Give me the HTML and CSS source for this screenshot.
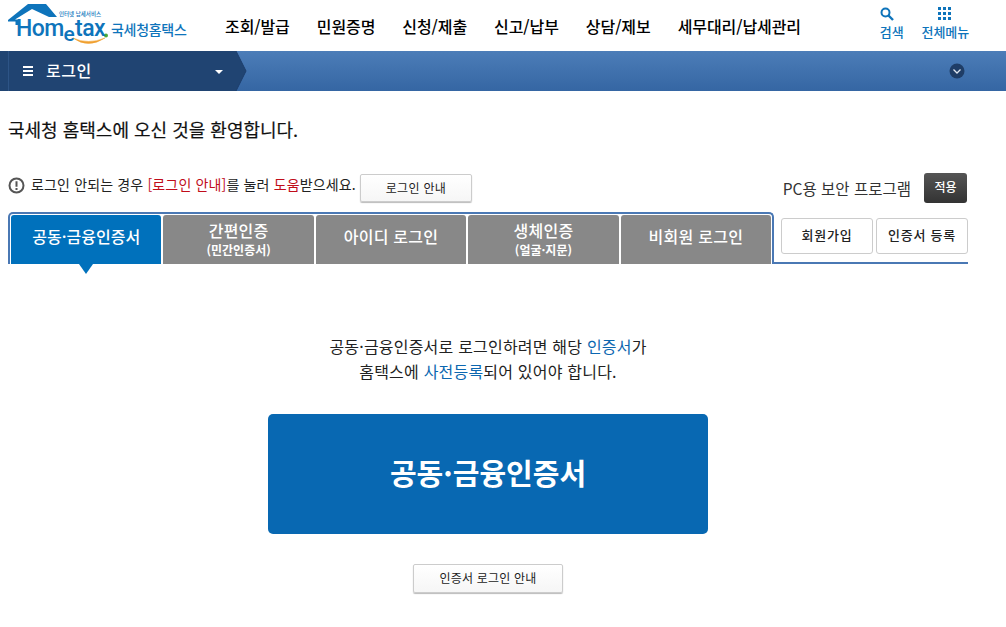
FILE: index.html
```html
<!DOCTYPE html>
<html lang="ko">
<head>
<meta charset="utf-8">
<title>국세청 홈택스</title>
<link rel="stylesheet" href="styles.css">
</head>
<body>
<header class="top">
  <a class="logo">
    <svg class="logo-art" width="190" height="50" viewBox="0 0 190 50">
      <path d="M8 20 L28 4 H46 L57 17 H49 L32 9 L15 19.5 H19 V25 H15.5 V21.5 H8 Z" fill="#0e74bb"/>
      <path d="M73 38 Q88 49 105 38 Q88 45 73 38 Z" fill="#f0a030" stroke="#f0a030" stroke-width=".5"/>
      <circle cx="106" cy="35.5" r="2" fill="#4fa83d"/>
      <text x="59" y="16" class="logo-small">인터넷 납세서비스</text>
      <text x="16" y="36" class="logo-word">Hom</text>
      <text x="63.5" y="41" class="logo-e">e</text>
      <text x="75" y="36" class="logo-word">tax</text>
      <text x="111" y="34.5" class="logo-nts">국세청홈택스</text>
    </svg>
  </a>
  <nav class="gnb">
    <a>조회/발급</a><a>민원증명</a><a>신청/제출</a><a>신고/납부</a><a>상담/제보</a><a>세무대리/납세관리</a>
  </nav>
  <div class="tools">
    <a class="tool tool-search">
      <svg class="ico-search" width="14" height="14" viewBox="0 0 14 14"><circle cx="5.5" cy="5.5" r="4" fill="none" stroke="#0e74bb" stroke-width="2"/><path d="M8.5 8.5 L13 13" stroke="#0e74bb" stroke-width="2.4"/></svg>
      <span>검색</span>
    </a>
    <a class="tool tool-all">
      <svg width="14" height="14" viewBox="0 0 14 14" fill="#0e74bb"><rect x="0" y="0" width="3" height="3"/><rect x="5" y="0" width="3" height="3"/><rect x="10" y="0" width="3" height="3"/><rect x="0" y="5" width="3" height="3"/><rect x="5" y="5" width="3" height="3"/><rect x="10" y="5" width="3" height="3"/><rect x="0" y="10" width="3" height="3"/><rect x="5" y="10" width="3" height="3"/><rect x="10" y="10" width="3" height="3"/></svg>
      <span>전체메뉴</span>
    </a>
  </div>
</header>
<div class="crumb">
  <div class="crumb-cur">
    <span class="burger"><i></i><i></i><i></i></span>
    <span class="crumb-label">로그인</span>
    <span class="caret"></span>
    <svg class="crumb-tip" width="12" height="40" viewBox="0 0 12 40"><path d="M0 0 H1 L11 20 L1 40 H0 Z" fill="#204472"/><path d="M1 0 L11 20 L1 40" fill="none" stroke="#1c3e6c" stroke-width="1"/></svg>
  </div>
  <span class="crumb-more"><svg width="16" height="16" viewBox="0 0 16 16"><circle cx="8" cy="8" r="7.5" fill="#1f3d66"/><path d="M4.5 6.5 L8 10 L11.5 6.5" fill="none" stroke="#dfe6ef" stroke-width="1.3"/></svg></span>
</div>
<main class="page">
  <h1 class="welcome">국세청 홈택스에 오신 것을 환영합니다.</h1>
  <div class="notice-row">
    <div class="notice">
      <svg class="notice-ico" width="17" height="17" viewBox="0 0 17 17"><circle cx="8.5" cy="8.5" r="7" fill="none" stroke="#555" stroke-width="2"/><path d="M8.5 4.2 V9.8 M8.5 11 V13" stroke="#555" stroke-width="2"/></svg>
      <span class="notice-text">로그인 안되는 경우 <em class="red">[로그인 안내]</em>를 눌러 <em class="red">도움</em>받으세요.</span>
      <a class="btn btn-guide">로그인 안내</a>
    </div>
    <div class="secure">
      <span class="secure-label">PC용 보안 프로그램</span>
      <a class="btn-dark">적용</a>
    </div>
  </div>
  <div class="tabs-row">
    <div class="tabs">
      <a class="tab tab-on tab-one">공동·금융인증서</a>
      <a class="tab"><span>간편인증</span><small>(민간인증서)</small></a>
      <a class="tab tab-one">아이디 로그인</a>
      <a class="tab"><span>생체인증</span><small>(얼굴·지문)</small></a>
      <a class="tab tab-one">비회원 로그인</a>
    </div>
    <div class="side">
      <a class="side-btn">회원가입</a>
      <a class="side-btn">인증서 등록</a>
    </div>
  </div>
  <section class="cert">
    <p class="cert-text">공동·금융인증서로 로그인하려면 해당 <b>인증서</b>가<br>홈택스에 <b>사전등록</b>되어 있어야 합니다.</p>
    <a class="cert-btn">공동·금융인증서</a>
    <a class="btn btn-cert">인증서 로그인 안내</a>
  </section>
</main>
</body>
</html>
```
FILE: styles.css
```css
* { box-sizing: border-box; }
html, body { margin: 0; padding: 0; }
body {
  width: 1006px;
  height: 627px;
  overflow: hidden;
  background: #fff;
  color: #222;
  font-family: "Noto Sans CJK KR", "Noto Sans", sans-serif;
}
em { font-style: normal; }
.top { height: 51px; display: flex; align-items: flex-start; }
.logo { display: block; width: 208px; height: 51px; }
.logo-art { display: block; }
.logo-small { font-size: 5.5px; font-weight: 500; fill: #0e74bb; }
.logo-word { font-family: Roboto, sans-serif; font-size: 23px; font-weight: 500; fill: #0e74bb; letter-spacing: -.5px; }
.logo-e { font-family: Roboto, sans-serif; font-size: 21px; font-weight: 500; fill: #0e74bb; }
.logo-nts { font-size: 14px; font-weight: 500; fill: #0e74bb; letter-spacing: -.3px; }
.gnb { display: flex; gap: 27px; padding: 15px 0 0 17px; font-size: 16px; font-weight: 500; color: #000; line-height: 22px; letter-spacing: -.08px; }
.tools { margin-left: auto; display: flex; gap: 18px; padding: 7px 37px 0 0; }
.tool { display: flex; flex-direction: column; align-items: center; color: #0e74bb; font-size: 13px; font-weight: 500; line-height: 18px; gap: 2px; letter-spacing: -.1px; }
.ico-search { margin-right: 9px; }
.crumb {
  height: 40px;
  display: flex;
  align-items: center;
  justify-content: space-between;
  background: linear-gradient(#4c7db8, #3566a3);
}
.crumb-cur {
  position: relative;
  width: 236px;
  height: 40px;
  display: flex;
  align-items: center;
  padding-left: 23px;
  background: linear-gradient(to right, #204472 8px, #2d5486 8px, #2d5486 9px, #204472 9px);
  color: #fff;
}
.burger { display: flex; flex-direction: column; gap: 2px; width: 10px; }
.burger i { display: block; height: 2px; background: #fff; }
.crumb-label { margin-left: 13px; padding-bottom: 2px; font-size: 16px; font-weight: 500; letter-spacing: .5px; }
.caret { position: absolute; left: 215px; top: 19px; border: 4px solid transparent; border-top-color: #fff; border-bottom: 0; }
.crumb-tip { position: absolute; left: 235px; top: 0; }
.crumb-more { display: flex; margin-right: 41px; }
.page { padding: 0 38px 0 8px; }
.welcome { margin: 0; padding-top: 25px; font-size: 18px; line-height: 26px; font-weight: 400; color: #111; -webkit-text-stroke: .2px #111; }
.notice-row { display: flex; justify-content: space-between; align-items: flex-start; margin-top: 31px; height: 39px; }
.notice { display: flex; align-items: center; color: #222; height: 30px; }
.notice-ico { margin: 0 6px 6px 0; }
.notice-text { font-size: 14px; line-height: 24px; padding-bottom: 9px; letter-spacing: .15px; }
.red { color: #c00d1a; }
.btn {
  display: flex; align-items: center; justify-content: center;
  background: linear-gradient(#fff, #f6f6f6);
  border: 1px solid #ccc;
  border-radius: 2px;
  box-shadow: 0 1px 1px #bbb;
  color: #222;
  font-size: 12px;
  padding-bottom: 2px;
}
.btn-guide { width: 112px; height: 28px; margin-left: 4px; letter-spacing: .3px; }
.secure { display: flex; align-items: center; height: 30px; }
.secure-label { font-size: 15.5px; color: #333; }
.btn-dark { width: 43px; height: 30px; margin: 0 1px 0 13px; padding-bottom: 3px; display: flex; align-items: center; justify-content: center; background: linear-gradient(#555, #333); border-radius: 3px; color: #fff; font-size: 12px; font-weight: 500; }
.tabs-row { display: flex; border-bottom: 2px solid #4a78b4; height: 52px; }
.tabs {
  display: flex; gap: 2px;
  width: 767px; height: 52px;
  padding: 1px 1px 0 1px;
  border: 2px solid #4a78b4;
  border-bottom: 0;
  border-radius: 5px 5px 0 0;
  background: #fff;
}
.tab {
  flex: 1;
  display: flex; flex-direction: column; align-items: center; justify-content: center;
  background: #888;
  color: #fff;
  border-radius: 3px 3px 0 0;
  font-size: 16px;
  font-weight: 500;
  line-height: 19px;
  letter-spacing: .25px;
  padding-bottom: 2px;
}
.tab-one { padding-bottom: 6px; }
.tab small { margin-top: 3px; font-size: 12px; font-weight: 700; line-height: 14px; letter-spacing: 0; }
.tab-on { position: relative; background: #0071bc; letter-spacing: 0; }
.tab-on::after { content: ""; position: absolute; left: 68px; top: 100%; border: 7px solid transparent; border-top: 10px solid #0071bc; border-bottom: 0; }
.side { display: flex; gap: 3px; padding: 6px 0 0 7px; }
.side-btn { width: 92px; height: 36px; padding-bottom: 3px; display: flex; align-items: center; justify-content: center; border: 1px solid #ccc; border-radius: 3px; font-size: 13px; font-weight: 500; color: #222; letter-spacing: .8px; }
.cert { display: flex; flex-direction: column; align-items: center; padding-top: 70px; }
.cert-text { margin: 0; font-size: 16px; line-height: 25px; text-align: center; color: #222; letter-spacing: .2px; }
.cert-text b { font-weight: 400; color: #0c67b0; }
.cert-btn { width: 440px; height: 120px; margin-top: 30px; padding-bottom: 4px; display: flex; align-items: center; justify-content: center; background: #0868b2; border-radius: 5px; color: #fff; font-size: 29px; font-weight: 700; }
.btn-cert { width: 150px; height: 29px; margin-top: 30px; letter-spacing: .2px; }
```
